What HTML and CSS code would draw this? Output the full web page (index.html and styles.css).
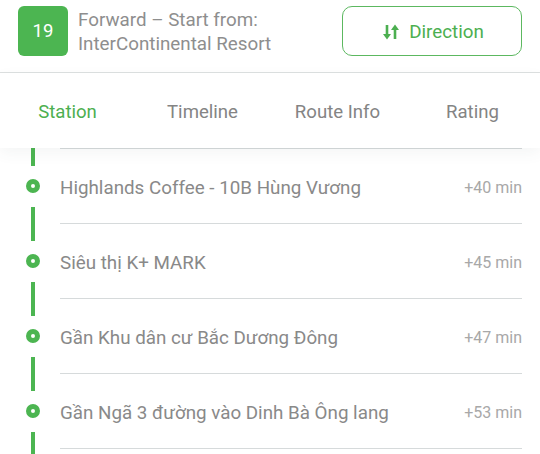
FILE: index.html
```html
<!DOCTYPE html>
<html>
<head>
<meta charset="utf-8">
<link rel="stylesheet" href="styles.css">
</head>
<body>
<div class="page">
  <header class="top">
    <div class="badge">19</div>
    <div class="title">
      <div>Forward – Start from:</div>
      <div>InterContinental Resort</div>
    </div>
    <button class="dir">
      <svg class="dir-icon" width="18" height="18" viewBox="0 0 18 18">
        <path d="M5 2 V13" stroke="#4caf50" stroke-width="2.6" fill="none"/>
        <path d="M1 11 L5 16.5 L9 11 Z" fill="#4caf50"/>
        <path d="M13 16 V5" stroke="#4caf50" stroke-width="2.6" fill="none"/>
        <path d="M9 7 L13 1.5 L17 7 Z" fill="#4caf50"/>
      </svg>
      <span>Direction</span>
    </button>
  </header>
  <nav class="tabs">
    <div class="tab active">Station</div>
    <div class="tab">Timeline</div>
    <div class="tab">Route Info</div>
    <div class="tab">Rating</div>
  </nav>
  <div class="list">
    <div class="row">
      <div class="rail"><span class="dot"></span></div>
      <div class="body"><span class="name">Highlands Coffee - 10B Hùng Vương</span><span class="time">+40 min</span></div>
    </div>
    <div class="row">
      <div class="rail"><span class="dot"></span></div>
      <div class="body"><span class="name">Siêu thị K+ MARK</span><span class="time">+45 min</span></div>
    </div>
    <div class="row">
      <div class="rail"><span class="dot"></span></div>
      <div class="body"><span class="name">Gần Khu dân cư Bắc Dương Đông</span><span class="time">+47 min</span></div>
    </div>
    <div class="row">
      <div class="rail"><span class="dot"></span></div>
      <div class="body"><span class="name">Gần Ngã 3 đường vào Dinh Bà Ông lang</span><span class="time">+53 min</span></div>
    </div>
    <div class="row row-tail">
      <div class="rail"></div>
      <div class="body"></div>
    </div>
  </div>
</div>
</body>
</html>
```
FILE: styles.css
```css
* { box-sizing: border-box; }
html, body { margin: 0; padding: 0; background: #fff; }
body {
  font-family: Roboto, "Noto Sans", sans-serif;
  width: 540px;
  height: 454px;
  overflow: hidden;
}
.page { width: 540px; }
.top {
  display: flex;
  align-items: flex-start;
  padding: 6px 18px 15px 18px;
  border-bottom: 1px solid #dde0e0;
  height: 73px;
}
.badge {
  width: 50px;
  height: 50px;
  border-radius: 6px;
  background: #4cb551;
  color: #fff;
  font-size: 18.5px;
  display: flex;
  align-items: center;
  justify-content: center;
  flex: none;
}
.title {
  margin-left: 10px;
  margin-top: 2px;
  color: #8e8e8e;
  font-size: 18.8px;
  line-height: 24px;
  flex: 1;
}
.dir {
  width: 180px;
  height: 50px;
  border: 1.5px solid #5cb860;
  border-radius: 10px;
  background: #fff;
  color: #4caf50;
  font-family: Roboto, "Noto Sans", sans-serif;
  font-size: 18.8px;
  display: flex;
  align-items: center;
  justify-content: center;
  gap: 9px;
  padding: 2px 0 0 2px;
  flex: none;
}
.dir-icon { display: block; margin-top: -1px; }
.tabs {
  display: grid;
  grid-template-columns: repeat(4, 1fr);
  height: 75px;
  align-items: center;
  position: relative;
  z-index: 2;
  box-shadow: 0 5px 14px rgba(60, 80, 80, 0.06);
  background: #fff;
}
.tab {
  text-align: center;
  font-size: 18.6px;
  color: #848484;
  padding-top: 3px;
}
.tab.active { color: #4caf50; }
.list { position: relative; }
.row {
  display: flex;
  height: 75px;
}
.rail {
  width: 60px;
  flex: none;
  display: flex;
  align-items: center;
  padding-left: 26px;
  background-image: linear-gradient(to bottom, #4cb551 0, #4cb551 18px, transparent 18px, transparent 59px, #4cb551 59px);
  background-size: 4px 100%;
  background-position: 31px 0;
  background-repeat: no-repeat;
}
.dot {
  width: 14px;
  height: 14px;
  border-radius: 50%;
  border: 5px solid #4cb551;
  background: #fff;
  margin-top: 1px;
}
.body {
  flex: 1;
  margin-right: 18px;
  border-top: 1px solid #d6dadb;
  display: flex;
  align-items: center;
  justify-content: space-between;
  padding-top: 3px;
}
.name {
  font-size: 18.8px;
  color: #898989;
}
.time {
  font-size: 16px;
  color: #a8a8a8;
}
```
